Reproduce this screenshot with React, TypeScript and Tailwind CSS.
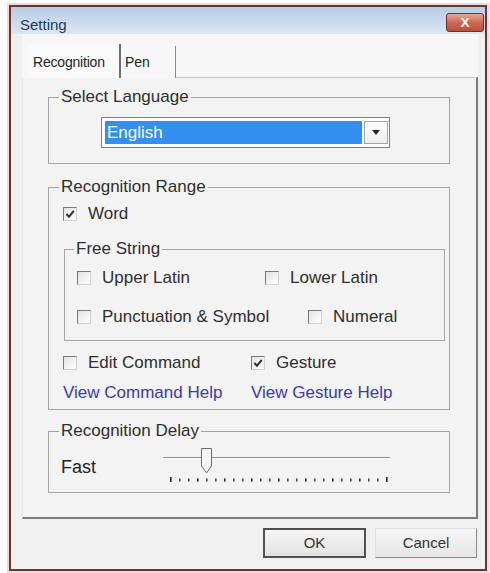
import React from 'react';

const Check = ({ checked = false }: { checked?: boolean }) => (
  <span className="w-[14px] h-[14px] shrink-0 border border-t-[#7a7a7a] border-l-[#7a7a7a] border-r-[#d0d0d0] border-b-[#d0d0d0] bg-gradient-to-br from-[#e2e2e2] to-white flex items-center justify-center">
    {checked && (
      <svg width="10" height="10" viewBox="0 0 10 10">
        <path d="M1.5 5 L4 7.8 L8.8 1.8" stroke="#2e2e2e" strokeWidth="2" fill="none" />
      </svg>
    )}
  </span>
);

const CheckItem = ({ label, checked, className = '' }: { label: string; checked?: boolean; className?: string }) => (
  <div className={`flex items-center h-[20px] ${className}`}>
    <Check checked={checked} />
    <span className="ml-[11px] whitespace-nowrap">{label}</span>
  </div>
);

const Legend = ({ children, offset = 'ml-[10px]' }: { children: React.ReactNode; offset?: string }) => (
  <legend className={`${offset} px-[2px] leading-[20px] text-[17px] text-[#2e2e2e]`}>{children}</legend>
);

const Slider = () => {
  const ticks = Array.from({ length: 25 }, (_, i) => 10 + i * 9);
  return (
    <svg width="232" height="40" viewBox="0 0 232 40">
      <line x1="3" y1="10.5" x2="230" y2="10.5" stroke="#8c8c8c" strokeWidth="1" />
      <line x1="3" y1="11.5" x2="230" y2="11.5" stroke="#ffffff" strokeWidth="1" />
      {ticks.map((x, i) => (
        <rect
          key={x}
          x={x}
          y={i === 0 || i === ticks.length - 1 ? 30 : 31.5}
          width="1.6"
          height={i === 0 || i === ticks.length - 1 ? 5 : 3}
          fill={i % 3 === 0 ? '#222' : '#4a4a4a'}
        />
      ))}
      <path d="M41.5 1.5 h10 v17.5 l-5 7 l-5 -7 z" fill="#f4f4f4" stroke="#6c6c6c" strokeWidth="1" />
      <line x1="43" y1="3" x2="43" y2="18" stroke="#ffffff" strokeWidth="1" />
    </svg>
  );
};

export default function App() {
  return (
    <div className="w-[490px] h-[573px] bg-white overflow-hidden pt-[5px] pl-[9px] font-['Liberation_Sans',Arial,sans-serif] text-[#2e2e2e]">
      <div className="w-[478px] h-[566px] border-2 border-[#6a3535] shadow-[0_0_0_2px_#f2d8d8] bg-[#f0f0f0] flex flex-col">
        {/* title bar */}
        <div className="h-[27px] shrink-0 bg-gradient-to-b from-[#b7cde5] to-[#dbe6f2] flex items-start justify-between">
          <span className="pl-[9px] pt-[9px] text-[15px] leading-[17px] text-[#1f3a5c]">Setting</span>
          <div className="mt-[6px] mr-[1px] w-[38px] h-[19px] rounded-[3px] border border-[#6e3030] bg-gradient-to-b from-[#e6a898] via-[#cf6852] to-[#b9503c] flex items-center justify-center text-white text-[13px] font-bold leading-none">
            X
          </div>
        </div>

        {/* tabs */}
        <div className="ml-[11px] w-[456px] h-[44px] shrink-0 flex items-end pl-[6px] bg-[#f7f7f7]">
          <div className="w-[93px] h-[34px] bg-[#fafafa] border-r-2 border-r-[#6f6f6f] flex items-center pl-[5px] pt-[3px] text-[14px] tracking-[-0.2px] text-[#222]">
            Recognition
          </div>
          <div className="w-[55px] h-[32px] border-r border-r-[#8a8a8a] flex items-center pl-[4px] pt-[1px] text-[14px] text-[#222]">
            Pen
          </div>
          <div className="flex-1 h-[1px] bg-[#c9c9c9] border-r border-r-[#7d7d7d]" />
        </div>

        {/* tab panel */}
        <div className="ml-[11px] w-[456px] h-[441px] shrink-0 border-l border-l-[#e6e6e6] border-r-2 border-r-[#7d7d7d] border-b-2 border-b-[#7d7d7d] bg-[#f3f3f3] flex flex-col pl-[25px] text-[17px]">
          <fieldset className="mt-[9px] w-[402px] h-[77px] border border-[#a3a3a3]">
            <Legend>Select Language</Legend>
            <div className="ml-[52px] mt-[10px] w-[289px] h-[31px] border border-[#7f7f7f] bg-white flex pl-[3px] py-[3px] pr-[1px]">
              <div className="flex-1 bg-[#3390f0] text-white flex items-center pl-[2px] leading-none">English</div>
              <div className="w-[24px] ml-[2px] border border-[#a5a5a5] bg-gradient-to-b from-white to-[#ececec] flex items-center justify-center">
                <svg width="8" height="5" viewBox="0 0 8 5">
                  <path d="M0 0 H8 L4 5 Z" fill="#222" />
                </svg>
              </div>
            </div>
          </fieldset>

          <fieldset className="mt-[13px] w-[402px] h-[233px] border border-[#a3a3a3]">
            <Legend>Recognition Range</Legend>
            <CheckItem label="Word" checked className="mt-[7px] pl-[14px]" />
            <fieldset className="mt-[15px] ml-[15px] w-[381px] h-[102px] border border-[#a3a3a3]">
              <Legend offset="ml-[9px]">Free String</Legend>
              <div className="mt-[9px] pl-[12px] flex">
                <CheckItem label="Upper Latin" className="w-[188px]" />
                <CheckItem label="Lower Latin" />
              </div>
              <div className="mt-[19px] pl-[12px] flex">
                <CheckItem label="Punctuation & Symbol" className="w-[231px]" />
                <CheckItem label="Numeral" />
              </div>
            </fieldset>
            <div className="mt-[12px] pl-[14px] flex">
              <CheckItem label="Edit Command" className="w-[188px]" />
              <CheckItem label="Gesture" checked />
            </div>
            <div className="mt-[10px] pl-[14px] flex h-[20px] items-center text-[#3b3ba6]">
              <span className="w-[188px] whitespace-nowrap">View Command Help</span>
              <span className="whitespace-nowrap">View Gesture Help</span>
            </div>
          </fieldset>

          <fieldset className="mt-[11px] w-[402px] h-[72px] border border-[#a3a3a3]">
            <Legend>Recognition Delay</Legend>
            <div className="mt-[6px] h-[40px] pl-[12px] flex items-center">
              <span className="w-[99px] text-[18px] text-[#222]">Fast</span>
              <Slider />
            </div>
          </fieldset>
        </div>

        {/* buttons */}
        <div className="mt-[9px] flex justify-end gap-[9px] pr-[8px]">
          <button className="w-[103px] h-[30px] border-2 border-[#505050] bg-gradient-to-b from-[#f6f6f6] to-[#e2e2e2] text-[15px] text-[#333]">
            OK
          </button>
          <button className="w-[102px] h-[30px] border border-t-[#e0e0e0] border-l-[#e0e0e0] border-r-[#8a8a8a] border-b-[#8a8a8a] bg-gradient-to-b from-[#f6f6f6] to-[#e6e6e6] text-[15px] text-[#333]">
            Cancel
          </button>
        </div>
      </div>
    </div>
  );
}
